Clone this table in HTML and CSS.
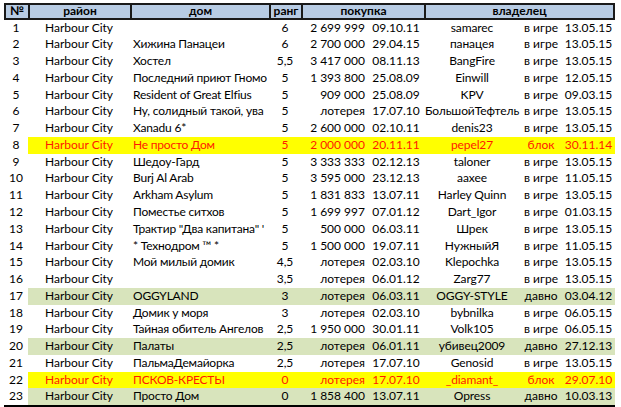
FILE: index.html
```html
<!DOCTYPE html>
<html lang="ru">
<head>
<meta charset="utf-8">
<title>Harbour City</title>
<link rel="stylesheet" href="styles.css">
</head>
<body>
<div class="sheet">
  <div class="head">
    <div class="h">№</div>
    <div class="h">район</div>
    <div class="h">дом</div>
    <div class="h">ранг</div>
    <div class="h span2">покупка</div>
    <div class="h span3 last">владелец</div>
  </div>
  <div class="row"><div class="c n">1</div><div class="c d">Harbour City</div><div class="c t"></div><div class="c r">6</div><div class="c p">2 699 999</div><div class="c dt">09.10.11</div><div class="c o">samarec</div><div class="c s">в игре</div><div class="c dt">13.05.15</div></div>
  <div class="row"><div class="c n">2</div><div class="c d">Harbour City</div><div class="c t">Хижина Панацеи</div><div class="c r">6</div><div class="c p">2 700 000</div><div class="c dt">29.04.15</div><div class="c o">панацея</div><div class="c s">в игре</div><div class="c dt">13.05.15</div></div>
  <div class="row"><div class="c n">3</div><div class="c d">Harbour City</div><div class="c t">Хостел</div><div class="c r">5,5</div><div class="c p">3 417 000</div><div class="c dt">08.11.13</div><div class="c o">BangFire</div><div class="c s">в игре</div><div class="c dt">13.05.15</div></div>
  <div class="row"><div class="c n">4</div><div class="c d">Harbour City</div><div class="c t">Последний приют Гномо</div><div class="c r">5</div><div class="c p">1 393 800</div><div class="c dt">25.08.09</div><div class="c o">Einwill</div><div class="c s">в игре</div><div class="c dt">12.05.15</div></div>
  <div class="row"><div class="c n">5</div><div class="c d">Harbour City</div><div class="c t">Resident of Great Elfius</div><div class="c r">5</div><div class="c p">909 000</div><div class="c dt">25.08.09</div><div class="c o">KPV</div><div class="c s">в игре</div><div class="c dt">09.03.15</div></div>
  <div class="row"><div class="c n">6</div><div class="c d">Harbour City</div><div class="c t">Ну, солидный такой, ува</div><div class="c r">5</div><div class="c p">лотерея</div><div class="c dt">17.07.10</div><div class="c o">БольшойТефтель</div><div class="c s">в игре</div><div class="c dt">13.05.15</div></div>
  <div class="row"><div class="c n">7</div><div class="c d">Harbour City</div><div class="c t">Xanadu 6*</div><div class="c r">5</div><div class="c p">2 600 000</div><div class="c dt">02.10.11</div><div class="c o">denis23</div><div class="c s">в игре</div><div class="c dt">13.05.15</div></div>
  <div class="row yel"><div class="c n">8</div><div class="c d">Harbour City</div><div class="c t">Не просто Дом</div><div class="c r">5</div><div class="c p">2 000 000</div><div class="c dt">20.11.11</div><div class="c o">pepel27</div><div class="c s">блок</div><div class="c dt">30.11.14</div></div>
  <div class="row"><div class="c n">9</div><div class="c d">Harbour City</div><div class="c t">Шедоу-Гард</div><div class="c r">5</div><div class="c p">3 333 333</div><div class="c dt">02.12.13</div><div class="c o">taloner</div><div class="c s">в игре</div><div class="c dt">13.05.15</div></div>
  <div class="row"><div class="c n">10</div><div class="c d">Harbour City</div><div class="c t">Burj Al Arab</div><div class="c r">5</div><div class="c p">3 595 000</div><div class="c dt">23.12.13</div><div class="c o">aaxee</div><div class="c s">в игре</div><div class="c dt">11.05.15</div></div>
  <div class="row"><div class="c n">11</div><div class="c d">Harbour City</div><div class="c t">Arkham Asylum</div><div class="c r">5</div><div class="c p">1 831 833</div><div class="c dt">13.07.11</div><div class="c o">Harley Quinn</div><div class="c s">в игре</div><div class="c dt">13.05.15</div></div>
  <div class="row"><div class="c n">12</div><div class="c d">Harbour City</div><div class="c t">Поместье ситхов</div><div class="c r">5</div><div class="c p">1 699 997</div><div class="c dt">07.01.12</div><div class="c o">Dart_Igor</div><div class="c s">в игре</div><div class="c dt">01.03.15</div></div>
  <div class="row"><div class="c n">13</div><div class="c d">Harbour City</div><div class="c t">Трактир "Два капитана" '</div><div class="c r">5</div><div class="c p">500 000</div><div class="c dt">06.03.11</div><div class="c o">Шрек</div><div class="c s">в игре</div><div class="c dt">13.05.15</div></div>
  <div class="row"><div class="c n">14</div><div class="c d">Harbour City</div><div class="c t">* Технодром ™ *</div><div class="c r">5</div><div class="c p">1 500 000</div><div class="c dt">19.07.11</div><div class="c o">НужныйЯ</div><div class="c s">в игре</div><div class="c dt">11.05.15</div></div>
  <div class="row"><div class="c n">15</div><div class="c d">Harbour City</div><div class="c t">Мой милый домик</div><div class="c r">4,5</div><div class="c p">лотерея</div><div class="c dt">02.03.10</div><div class="c o">Klepochka</div><div class="c s">в игре</div><div class="c dt">13.05.15</div></div>
  <div class="row"><div class="c n">16</div><div class="c d">Harbour City</div><div class="c t"></div><div class="c r">3,5</div><div class="c p">лотерея</div><div class="c dt">06.01.12</div><div class="c o">Zarg77</div><div class="c s">в игре</div><div class="c dt">13.05.15</div></div>
  <div class="row grn"><div class="c n">17</div><div class="c d">Harbour City</div><div class="c t">OGGYLAND</div><div class="c r">3</div><div class="c p">лотерея</div><div class="c dt">06.03.11</div><div class="c o">OGGY-STYLE</div><div class="c s">давно</div><div class="c dt">03.04.12</div></div>
  <div class="row"><div class="c n">18</div><div class="c d">Harbour City</div><div class="c t">Домик у моря</div><div class="c r">3</div><div class="c p">лотерея</div><div class="c dt">02.03.10</div><div class="c o">bybnilka</div><div class="c s">в игре</div><div class="c dt">06.05.15</div></div>
  <div class="row"><div class="c n">19</div><div class="c d">Harbour City</div><div class="c t">Тайная обитель Ангелов</div><div class="c r">2,5</div><div class="c p">1 950 000</div><div class="c dt">30.01.11</div><div class="c o">Volk105</div><div class="c s">в игре</div><div class="c dt">06.05.15</div></div>
  <div class="row grn"><div class="c n">20</div><div class="c d">Harbour City</div><div class="c t">Палаты</div><div class="c r">2,5</div><div class="c p">лотерея</div><div class="c dt">06.01.11</div><div class="c o">убивец2009</div><div class="c s">давно</div><div class="c dt">27.12.13</div></div>
  <div class="row"><div class="c n">21</div><div class="c d">Harbour City</div><div class="c t">ПальмаДемайорка</div><div class="c r">2,5</div><div class="c p">лотерея</div><div class="c dt">17.07.10</div><div class="c o">Genosid</div><div class="c s">в игре</div><div class="c dt">13.05.15</div></div>
  <div class="row yel"><div class="c n">22</div><div class="c d">Harbour City</div><div class="c t">ПСКОВ-КРЕСТЫ</div><div class="c r">0</div><div class="c p">лотерея</div><div class="c dt">17.07.10</div><div class="c o">_diamant_</div><div class="c s">блок</div><div class="c dt">29.07.10</div></div>
  <div class="row grn"><div class="c n">23</div><div class="c d">Harbour City</div><div class="c t">Просто Дом</div><div class="c r">0</div><div class="c p">1 858 400</div><div class="c dt">13.07.11</div><div class="c o">Opress</div><div class="c s">давно</div><div class="c dt">10.03.13</div></div>
  <div class="bottom"></div>
</div>
</body>
</html>
```

FILE: styles.css
```css
html, body {
  margin: 0;
  padding: 0;
  background: #fff;
}

body {
  font-family: Lato, "Liberation Sans", sans-serif;
  font-size: 12px;
  color: #000;
}

.sheet {
  width: 611px;
  padding: 3px 0 0 4px;
}

.head,
.row {
  display: grid;
  grid-template-columns: 24px 102px 139px 32px 67px 56px 96px 42px 53px;
}

.head {
  height: 16.6px;
  box-sizing: border-box;
  border-top: 2px solid #1a1a1a;
  border-bottom: 2px solid #1a1a1a;
  background: #b8cce4;
}

.h {
  font-weight: bold;
  text-align: center;
  line-height: 12.6px;
  border-left: 2px solid #1a1a1a;
  white-space: nowrap;
}

.h.last {
  border-right: 2px solid #1a1a1a;
}

.span2 { grid-column: span 2; }
.span3 { grid-column: span 3; }

.row {
  height: 16.77px;
  line-height: 16.77px;
}

.c {
  white-space: nowrap;
  overflow: hidden;
}

.n { text-align: center; }
.d { text-align: center; }
.t { text-align: left; padding-left: 3px; letter-spacing: -0.2px; }
.r { text-align: center; }
.p { text-align: right; padding-right: 3px; }
.dt { text-align: center; }
.o { text-align: center; letter-spacing: -0.1px; }
.s { text-align: center; }

.row.yel > .c:not(:first-child) {
  background: #ffff00;
  color: #ff1a00;
}

.row.grn > .c:not(:first-child) {
  background: #d8e4bc;
}

.bottom {
  height: 2px;
  background: #000;
}
```
